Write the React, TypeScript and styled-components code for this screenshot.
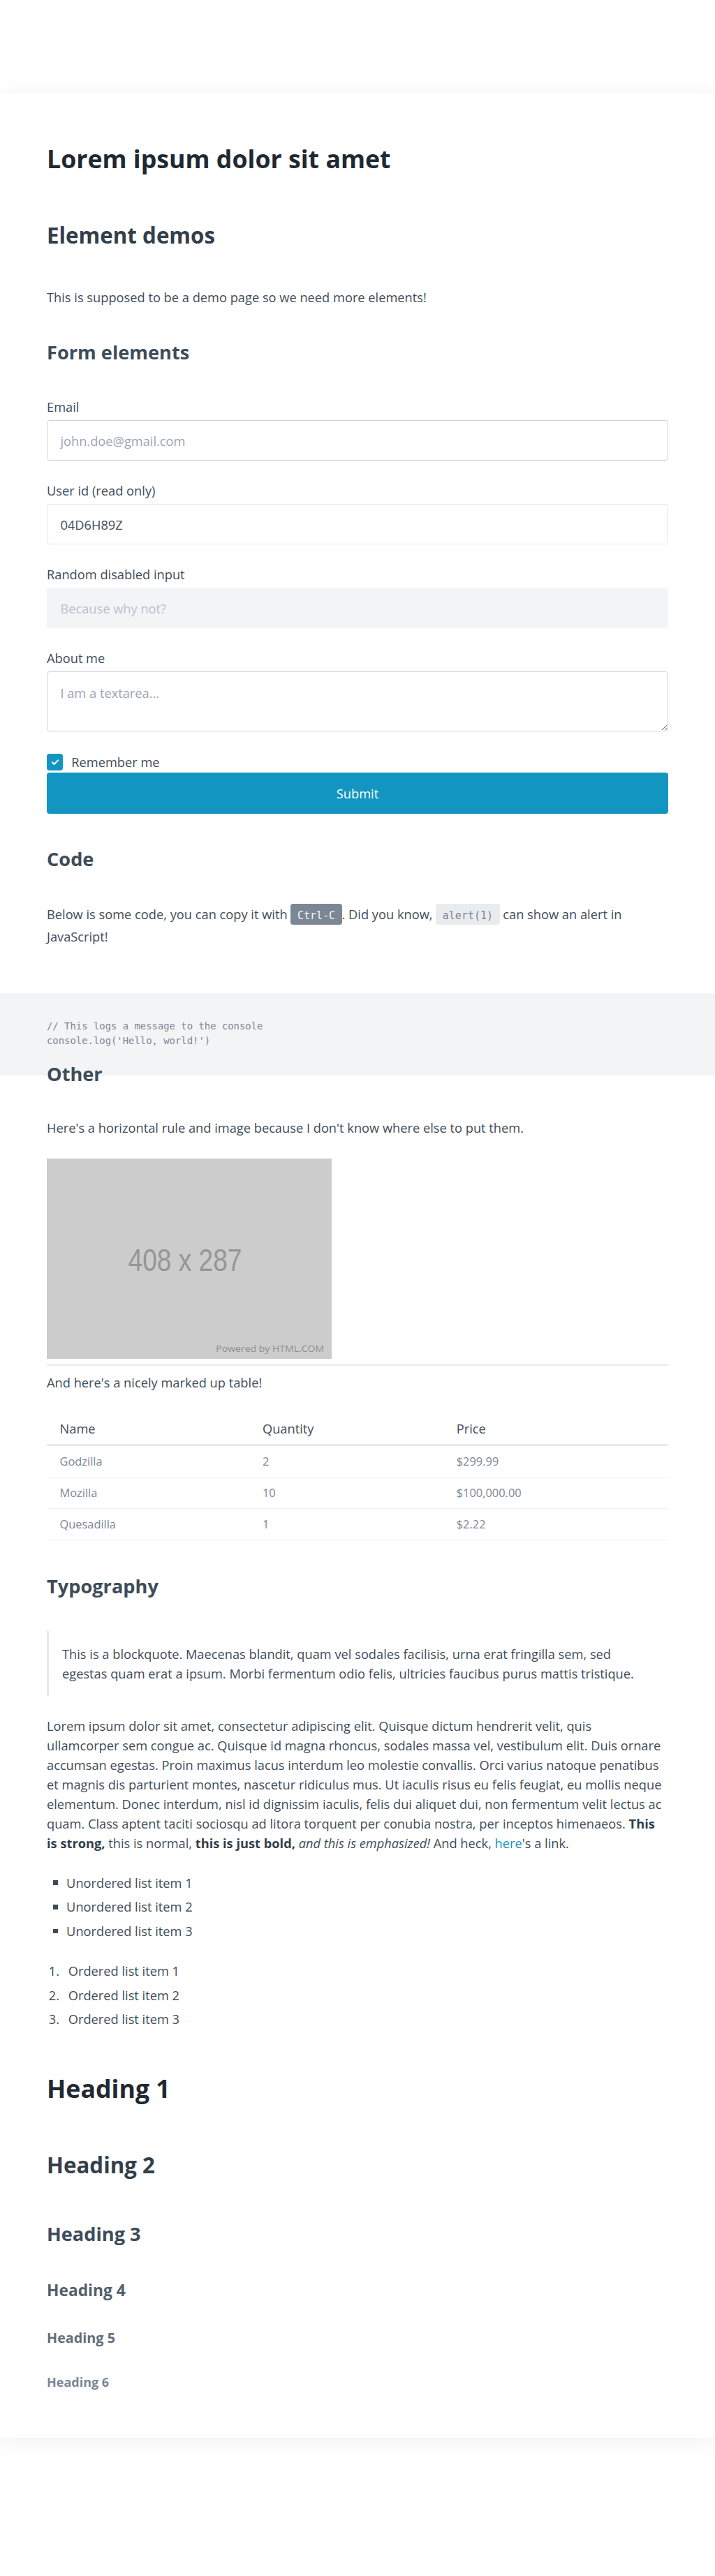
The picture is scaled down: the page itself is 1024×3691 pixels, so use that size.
import React from "react";
import styled, { createGlobalStyle, css } from "styled-components";

const GlobalStyle = createGlobalStyle`
  html, body { margin: 0; padding: 0; background: #ffffff; }
  body {
    font-family: "Open Sans", "Noto Sans", sans-serif;
    color: #3e4c59;
    -webkit-font-smoothing: antialiased;
  }
  * { box-sizing: border-box; }
`;

const BLUE = "#1296c1";
const BODY = "#3e4c59";

const Page = styled.div`
  padding: 133px 0 199px;
`;

const Card = styled.main`
  background: #ffffff;
  border-radius: 5px;
  box-shadow: 0 4px 30px rgba(31, 41, 51, 0.07);
  padding: 73.35px 67px 69.4px;
  display: flex;
  flex-direction: column;
`;

type Level = 1 | 2 | 3 | 4 | 5 | 6;
const levels: Record<Level, { size: number; lh: number; color: string }> = {
  1: { size: 35.7, lh: 43, color: "#1f2933" },
  2: { size: 31.3, lh: 38, color: "#323f4b" },
  3: { size: 27.2, lh: 33, color: "#3e4c59" },
  4: { size: 22.8, lh: 28, color: "#52606d" },
  5: { size: 19.8, lh: 24, color: "#616e7c" },
  6: { size: 18, lh: 22, color: "#7b8794" },
};

const Heading = styled.h1<{ $level: Level; $mt: number }>`
  margin: ${(p) => p.$mt}px 0 0;
  font-weight: 700;
  font-size: ${(p) => levels[p.$level].size}px;
  line-height: ${(p) => levels[p.$level].lh}px;
  color: ${(p) => levels[p.$level].color};
`;

const Para = styled.p<{ $mt: number; $lh?: number; $nowrap?: boolean }>`
  margin: ${(p) => p.$mt}px 0 0;
  font-size: 18.25px;
  line-height: ${(p) => p.$lh ?? 28}px;
  color: ${BODY};
  white-space: ${(p) => (p.$nowrap ? "nowrap" : "normal")};
`;

const Form = styled.form`
  display: flex;
  flex-direction: column;
`;

const Field = styled.div<{ $mt: number }>`
  display: flex;
  flex-direction: column;
  gap: 5.4px;
  margin-top: ${(p) => p.$mt}px;
`;

const Label = styled.label`
  font-size: 18.25px;
  line-height: 28px;
  color: ${BODY};
`;

const fieldBase = css`
  width: 100%;
  font-family: "Open Sans", "Noto Sans", sans-serif;
  font-size: 18.25px;
  color: ${BODY};
  border-radius: 4px;
  border: 1px solid #cbd2d9;
  background: #ffffff;
  outline: none;
  &::placeholder {
    color: #9aa5b1;
  }
`;

const TextInput = styled.input<{ $variant?: "default" | "readonly" | "disabled" }>`
  ${fieldBase}
  height: 58px;
  padding: 0 18.4px;
  ${(p) =>
    p.$variant === "readonly" &&
    css`
      border-color: #e4e7eb;
    `}
  ${(p) =>
    p.$variant === "disabled" &&
    css`
      border-color: #f3f4f6;
      background: #f3f4f6;
      &::placeholder {
        color: #b8c1cb;
      }
    `}
`;

const TextArea = styled.textarea`
  ${fieldBase}
  display: block;
  height: 86px;
  padding: 15.6px 18.4px;
  line-height: 28px;
`;

const CheckRow = styled.label`
  display: flex;
  align-items: center;
  gap: 12.3px;
  margin-top: 31.7px;
  height: 24px;
  font-size: 18.25px;
  line-height: 24px;
  color: ${BODY};
`;

const CheckBox = styled.span`
  width: 23px;
  height: 24px;
  border-radius: 4px;
  background: ${BLUE};
  display: flex;
  align-items: center;
  justify-content: center;
`;

const SubmitButton = styled.button`
  margin-top: 3px;
  width: 100%;
  height: 58.7px;
  border: none;
  border-radius: 4px;
  background: ${BLUE};
  color: #ffffff;
  font-family: "Open Sans", "Noto Sans", sans-serif;
  font-size: 18.25px;
`;

const chip = css`
  font-family: "DejaVu Sans Mono", "Liberation Mono", monospace;
  font-size: 15px;
  padding: 7.6px 9.5px 4.8px;
  border-radius: 4px;
`;

const Kbd = styled.kbd`
  ${chip}
  background: #7b8794;
  color: #f5f7fa;
`;

const InlineCode = styled.code`
  ${chip}
  background: #e9ecef;
  color: #7b8794;
`;

const Pre = styled.pre`
  margin: 66.4px -67px 0;
  padding: 36.7px 67px 39px;
  background: #f3f4f6;
  font-family: "DejaVu Sans Mono", "Liberation Mono", monospace;
  font-size: 13.9px;
  line-height: 21px;
  color: #7b8794;
`;

const Figure = styled.svg`
  display: block;
  margin-top: 30.1px;
`;

const Rule = styled.hr`
  margin: 8.5px 0 0;
  border: none;
  height: 2px;
  background: #e8ebee;
`;

const Table = styled.table`
  margin-top: 30.8px;
  width: 100%;
  border-collapse: collapse;
  table-layout: fixed;
`;

const Th = styled.th`
  text-align: left;
  font-weight: 400;
  font-size: 18.25px;
  line-height: 28px;
  color: ${BODY};
  padding: 8px 18.5px;
  border-bottom: 3px solid #e9ecef;
`;

const Td = styled.td`
  font-size: 16.4px;
  line-height: 26px;
  color: #7b8794;
  padding: 9px 18.5px;
  border-bottom: 1px solid #eef0f3;
`;

const Quote = styled.blockquote`
  margin: 48px 0 0;
  border-left: 3px solid #e4e7eb;
  padding: 18.9px 21px 18.4px 19px;
  font-size: 18.25px;
  line-height: 28px;
  color: ${BODY};
`;

const Strong = styled.strong`
  font-weight: 700;
  color: #323f4b;
`;

const Link = styled.a`
  color: ${BLUE};
  text-decoration: none;
`;

const List = styled.ul<{ $mt: number }>`
  margin: ${(p) => p.$mt}px 0 0;
  padding: 0;
  list-style: none;
  display: flex;
  flex-direction: column;
  gap: 6.8px;
  counter-reset: item;
`;

const BulletItem = styled.li`
  display: flex;
  align-items: center;
  font-size: 18.25px;
  line-height: 28px;
  color: ${BODY};
  &::before {
    content: "";
    width: 6.5px;
    height: 6.5px;
    margin: 0 12.5px 0 9.1px;
    background: #3e4c59;
    flex: none;
  }
`;

const NumberItem = styled.li`
  display: flex;
  font-size: 18.25px;
  line-height: 28px;
  color: ${BODY};
  counter-increment: item;
  &::before {
    content: counter(item) ".";
    width: 28.1px;
    padding-left: 2.7px;
    flex: none;
  }
`;

const rows = [
  ["Godzilla", "2", "$299.99"],
  ["Mozilla", "10", "$100,000.00"],
  ["Quesadilla", "1", "$2.22"],
];

export default function App() {
  return (
    <>
      <GlobalStyle />
      <Page>
        <Card>
          <Heading as="h1" $level={1} $mt={0}>
            Lorem ipsum dolor sit amet
          </Heading>
          <Heading as="h2" $level={2} $mt={68.8}>
            Element demos
          </Heading>
          <Para $mt={56.1}>This is supposed to be a demo page so we need more elements!</Para>

          <Heading as="h3" $level={3} $mt={47.7}>
            Form elements
          </Heading>
          <Form onSubmit={(e) => e.preventDefault()}>
            <Field $mt={48}>
              <Label htmlFor="email">Email</Label>
              <TextInput id="email" type="email" placeholder="john.doe@gmail.com" />
            </Field>
            <Field $mt={28.6}>
              <Label htmlFor="uid">User id (read only)</Label>
              <TextInput id="uid" $variant="readonly" readOnly value="04D6H89Z" />
            </Field>
            <Field $mt={28.6}>
              <Label htmlFor="rnd">Random disabled input</Label>
              <TextInput id="rnd" $variant="disabled" disabled placeholder="Because why not?" />
            </Field>
            <Field $mt={28.6}>
              <Label htmlFor="about">About me</Label>
              <TextArea id="about" placeholder="I am a textarea..." />
            </Field>
            <CheckRow>
              <CheckBox>
                <svg width="14" height="14" viewBox="0 0 24 24" fill="none" stroke="#ffffff" strokeWidth="3.6" strokeLinecap="round" strokeLinejoin="round">
                  <path d="M5 12.5l4.5 4.5L19 7.5" />
                </svg>
              </CheckBox>
              Remember me
            </CheckRow>
            <SubmitButton type="submit">Submit</SubmitButton>
          </Form>

          <Heading as="h3" $level={3} $mt={47.95}>
            Code
          </Heading>
          <Para $mt={47.95} $lh={30}>
            Below is some code, you can copy it with <Kbd>Ctrl-C</Kbd>. Did you know, <InlineCode>alert(1)</InlineCode> can show an alert in JavaScript!
          </Para>
          <Pre>{`// This logs a message to the console
console.log('Hello, world!')`}</Pre>

          <Heading as="h3" $level={3} $mt={-19.05}>
            Other
          </Heading>
          <Para $mt={47.3}>Here's a horizontal rule and image because I don't know where else to put them.</Para>
          <Figure width="408" height="287" viewBox="0 0 408 287" role="img" aria-label="408 x 287">
            <rect width="408" height="287" fill="#cccccc" />
            <text x="198" y="160.6" textAnchor="middle" fontFamily="Liberation Sans, Arial, sans-serif" fontSize="44" fill="#969696" textLength="163" lengthAdjust="spacingAndGlyphs">
              408 x 287
            </text>
            <text x="242.3" y="276.6" fontFamily="Open Sans, sans-serif" fontSize="12.5" fill="#8e8e8e" textLength="154.8" lengthAdjust="spacingAndGlyphs">
              Powered by HTML.COM
            </text>
          </Figure>
          <Rule />
          <Para $mt={9.1}>And here's a nicely marked up table!</Para>
          <Table>
            <colgroup>
              <col style={{ width: "32.64%" }} />
              <col style={{ width: "31.21%" }} />
              <col style={{ width: "36.15%" }} />
            </colgroup>
            <thead>
              <tr>
                <Th>Name</Th>
                <Th>Quantity</Th>
                <Th>Price</Th>
              </tr>
            </thead>
            <tbody>
              {rows.map((r) => (
                <tr key={r[0]}>
                  {r.map((c) => (
                    <Td key={c}>{c}</Td>
                  ))}
                </tr>
              ))}
            </tbody>
          </Table>

          <Heading as="h3" $level={3} $mt={48.55}>
            Typography
          </Heading>
          <Quote>
            This is a blockquote. Maecenas blandit, quam vel sodales facilisis, urna erat fringilla sem, sed egestas quam erat a ipsum. Morbi fermentum odio felis, ultricies faucibus purus mattis tristique.
          </Quote>
          <Para $mt={28.35} $nowrap>
            Lorem ipsum dolor sit amet, consectetur adipiscing elit. Quisque dictum hendrerit velit, quis
            <br />
            ullamcorper sem congue ac. Quisque id magna rhoncus, sodales massa vel, vestibulum elit. Duis ornare
            <br />
            accumsan egestas. Proin maximus lacus interdum leo molestie convallis. Orci varius natoque penatibus
            <br />
            et magnis dis parturient montes, nascetur ridiculus mus. Ut iaculis risus eu felis feugiat, eu mollis neque
            <br />
            elementum. Donec interdum, nisl id dignissim iaculis, felis dui aliquet dui, non fermentum velit lectus ac
            <br />
            quam. Class aptent taciti sociosqu ad litora torquent per conubia nostra, per inceptos himenaeos. <Strong>This</Strong>
            <br />
            <Strong>is strong,</Strong> this is normal, <Strong>this is just bold,</Strong> <em>and this is emphasized!</em> And heck, <Link href="#">here</Link>'s a link.
          </Para>
          <List $mt={29}>
            <BulletItem>Unordered list item 1</BulletItem>
            <BulletItem>Unordered list item 2</BulletItem>
            <BulletItem>Unordered list item 3</BulletItem>
          </List>
          <List as="ol" $mt={28.7}>
            <NumberItem>Ordered list item 1</NumberItem>
            <NumberItem>Ordered list item 2</NumberItem>
            <NumberItem>Ordered list item 3</NumberItem>
          </List>

          <Heading as="h1" $level={1} $mt={63.75}>
            Heading 1
          </Heading>
          <Heading as="h2" $level={2} $mt={68.5}>
            Heading 2
          </Heading>
          <Heading as="h3" $level={3} $mt={63}>
            Heading 3
          </Heading>
          <Heading as="h4" $level={4} $mt={51.6}>
            Heading 4
          </Heading>
          <Heading as="h5" $level={5} $mt={42.2}>
            Heading 5
          </Heading>
          <Heading as="h6" $level={6} $mt={39.7}>
            Heading 6
          </Heading>
        </Card>
      </Page>
    </>
  );
}
